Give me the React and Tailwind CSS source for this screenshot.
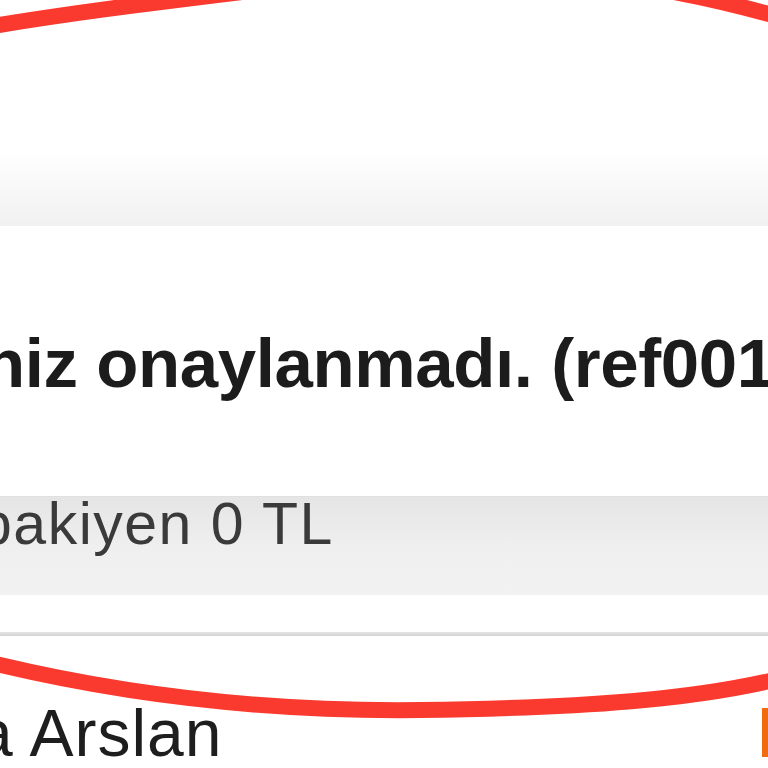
import React from 'react';

function Annotation() {
  return (
    <svg className="absolute inset-0 pointer-events-none" width="768" height="768" viewBox="0 0 768 768">
      <g fill="none" stroke="#fa3a2e" strokeWidth="16" strokeLinecap="round">
        <path d="M -30 30 C 60 14, 160 2, 275 -12" />
        <path d="M 640 -14 C 690 -6, 735 4, 790 20" />
        <path d="M -20 660 C 100 690, 250 712, 420 710 C 580 708, 700 700, 790 676" />
      </g>
    </svg>
  );
}

export default function App() {
  return (
    <div className="relative w-[768px] h-[768px] overflow-hidden bg-white font-['Liberation_Sans',Arial,sans-serif]">
      <div className="h-[150px] bg-white" />
      <div className="h-[76px] bg-linear-to-b from-white to-[#f1f1f1]" />

      <div className="h-[270px] flex items-start pt-[98px]">
        <p className="ml-[-55px] whitespace-nowrap text-[69px] leading-[80px] tracking-[-0.4px] font-bold text-[#1c1c1c]">
          eniz onaylanmadı. (ref0011)
        </p>
      </div>

      <div className="h-[99px] bg-linear-to-b from-[#e5e5e5] via-[#efefef] to-[#f2f2f2] border-t border-[#e0e0e0]">
        <p className="ml-[-21px] mt-[-5px] whitespace-nowrap text-[59px] leading-[64px] tracking-[1.5px] text-[#3a3a3a]">
          bakiyen 0 TL
        </p>
      </div>

      <div className="h-[37px] bg-white" />
      <div className="h-[4px] bg-linear-to-b from-[#e4e4e4] to-[#d3d3d3]" />

      <div className="flex items-start justify-between pt-[61px]">
        <p className="ml-[-24px] whitespace-nowrap text-[66px] leading-[72px] tracking-[1px] text-[#1e1e1e]">
          a Arslan
        </p>
        <div className="mt-[11px] w-[10px] h-[49px] bg-[#f06b12] mr-[-4px]" />
      </div>

      <Annotation />
    </div>
  );
}
